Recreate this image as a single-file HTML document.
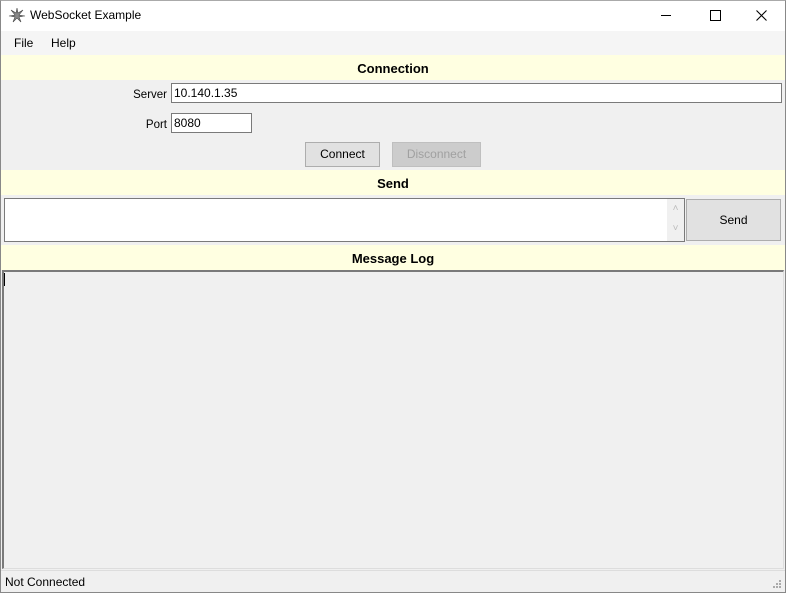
<!DOCTYPE html><html><head><style>
*{margin:0;padding:0;box-sizing:border-box}
body{width:786px;height:593px;position:relative;background:#f0f0f0;font-family:"Liberation Sans",sans-serif;font-size:12px;overflow:hidden}
.a{position:absolute}
.hdr{position:absolute;left:1px;width:784px;background:#ffffe1;text-align:center;font-weight:bold;font-size:13px}
.tb{background:#fff;border:1px solid #7a7a7a;padding:2px 2px;font-size:12px}
.btn{background:#e1e1e1;border:1px solid #adadad;text-align:center;font-size:12px}
</style></head><body>
<div class="a" style="left:0;top:0;width:786px;height:593px;border:1px solid #888;border-top-color:#aaa"></div>
<div class="a" style="left:1px;top:1px;width:784px;height:30px;background:#fff"></div>
<svg class="a" style="left:8px;top:7px" width="18" height="16" viewBox="0 0 18 16"><path d="M9 1 L10 6 L15 3 L11 8 L17 9 L11 10 L13 15 L9 11 L5 15 L7 10 L1 9 L7 8 L3 3 L8 6Z" fill="#888" stroke="#444" stroke-width=".6"/></svg>
<div class="a" style="left:30px;top:8px;font-size:12px">WebSocket Example</div>
<div class="a" style="left:661px;top:15px;width:10px;height:1px;background:#000"></div>
<div class="a" style="left:710px;top:10px;width:11px;height:11px;border:1px solid #000"></div>
<svg class="a" style="left:756px;top:10px" width="11" height="11"><path d="M0.5 0.5L10.5 10.5M10.5 0.5L0.5 10.5" stroke="#000" stroke-width="1.1"/></svg>
<div class="a" style="left:1px;top:31px;width:784px;height:24px;background:#f5f5f5"></div>
<div class="a" style="left:14px;top:36px">File</div>
<div class="a" style="left:51px;top:36px">Help</div>
<div class="hdr" style="top:55px;height:25px;line-height:27px">Connection</div>
<div class="a" style="left:100px;top:89px;width:67px;text-align:right;font-size:11.5px">Server</div>
<div class="a tb" style="left:171px;top:83px;width:611px;height:20px;padding-top:2px">10.140.1.35</div>
<div class="a" style="left:100px;top:119px;width:67px;text-align:right;font-size:11.5px">Port</div>
<div class="a tb" style="left:171px;top:113px;width:81px;height:20px">8080</div>
<div class="a btn" style="left:305px;top:142px;width:75px;height:25px;line-height:23px">Connect</div>
<div class="a btn" style="left:392px;top:142px;width:89px;height:25px;line-height:23px;color:#a0a0a0;background:#ccc;border-color:#bfbfbf">Disconnect</div>
<div class="hdr" style="top:170px;height:25px;line-height:27px">Send</div>
<div class="a" style="left:4px;top:198px;width:681px;height:44px;background:#fff;border:1px solid #7a7a7a"></div>
<div class="a" style="left:667px;top:199px;width:17px;height:42px;background:#f0f0f0;color:#bbb;font-size:10px;text-align:center;line-height:20px">˄<br>˅</div>
<div class="a btn" style="left:686px;top:199px;width:95px;height:42px;line-height:40px">Send</div>
<div class="hdr" style="top:245px;height:25px;line-height:27px">Message Log</div>
<div class="a" style="left:2px;top:270px;width:782px;height:299px;background:#f0f0f0;border-top:2px solid #7a7a7a;border-left:2px solid #7a7a7a;border-right:1px solid #ddd;border-bottom:1px solid #ddd"></div>
<div class="a" style="left:4px;top:273px;width:1px;height:13px;background:#000"></div>
<div class="a" style="left:1px;top:570px;width:784px;height:22px;background:#f0f0f0;border-top:1px solid #ddd"></div>
<div class="a" style="left:5px;top:575px">Not Connected</div>
<svg class="a" style="left:772px;top:579px" width="10" height="10"><g fill="#aaa"><rect x="7" y="1" width="2" height="2"/><rect x="4" y="4" width="2" height="2"/><rect x="7" y="4" width="2" height="2"/><rect x="1" y="7" width="2" height="2"/><rect x="4" y="7" width="2" height="2"/><rect x="7" y="7" width="2" height="2"/></g></svg>
</body></html>
